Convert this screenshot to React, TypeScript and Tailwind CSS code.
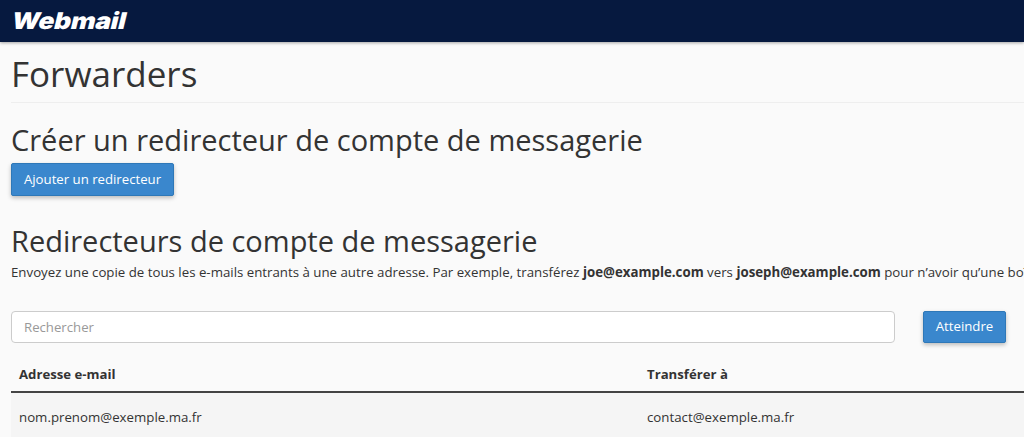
export default function App() {
  return (
    <div className="h-[437px] w-[1024px] overflow-hidden bg-[#fafafa] font-['Open_Sans',sans-serif] text-[#333]">
      {/* Top bar */}
      <header className="flex h-[42px] items-center bg-[#06193f] pl-[12px] shadow-[0_1px_3px_rgba(0,0,0,0.35)]">
        <span className="origin-left -skew-x-12 scale-x-[1.14] font-['Inter',sans-serif] text-[23px] font-black leading-none tracking-[-0.2px] text-white">
          Webmail
        </span>
      </header>

      <main className="pl-[11px]">
        <div className="border-b border-[#eee] pb-[6px] pt-[10px]">
          <h1 className="text-[35px] leading-[44px]">Forwarders</h1>
        </div>

        <h2 className="mt-[18px] text-[29px] leading-[38px]">Créer un redirecteur de compte de messagerie</h2>
        <button
          type="button"
          className="mt-[4px] block h-[33px] w-[163px] rounded-[2px] border border-[#2e78b8] bg-[#3a87cd] text-center text-[13.2px] text-white shadow-[0_2px_4px_rgba(0,0,0,0.25)]"
        >
          Ajouter un redirecteur
        </button>

        <h2 className="mt-[26px] text-[29px] leading-[38px]">Redirecteurs de compte de messagerie</h2>
        <p className="mt-[3px] whitespace-nowrap text-[13.28px] leading-[18px]">
          Envoyez une copie de tous les e-mails entrants à une autre adresse. Par exemple, transférez{" "}
          <b>joe@example.com</b> vers <b>joseph@example.com</b> pour n’avoir qu’une boîte
        </p>

        <div className="mt-[30px] flex items-center">
          <input
            placeholder="Rechercher"
            className="h-[32px] w-[884px] rounded-[4px] border border-[#ccc] bg-white px-[12px] text-[13.2px] placeholder:text-[#999]"
          />
          <button
            type="button"
            className="ml-[28px] h-[32px] w-[83px] rounded-[2px] border border-[#2e78b8] bg-[#3a87cd] text-center text-[13.2px] text-white shadow-[0_2px_4px_rgba(0,0,0,0.25)]"
          >
            Atteindre
          </button>
        </div>

        {/* Table */}
        <div className="mt-[16px] flex h-[34px] items-center border-b-2 border-[#444] text-[13.2px] font-bold">
          <div className="w-[636px] pl-[8px]">Adresse e-mail</div>
          <div>Transférer à</div>
        </div>
        <div className="flex h-[50px] items-center bg-[#f5f5f5] text-[13.28px]">
          <div className="w-[636px] pl-[8px]">nom.prenom@exemple.ma.fr</div>
          <div>contact@exemple.ma.fr</div>
        </div>
      </main>
    </div>
  );
}
